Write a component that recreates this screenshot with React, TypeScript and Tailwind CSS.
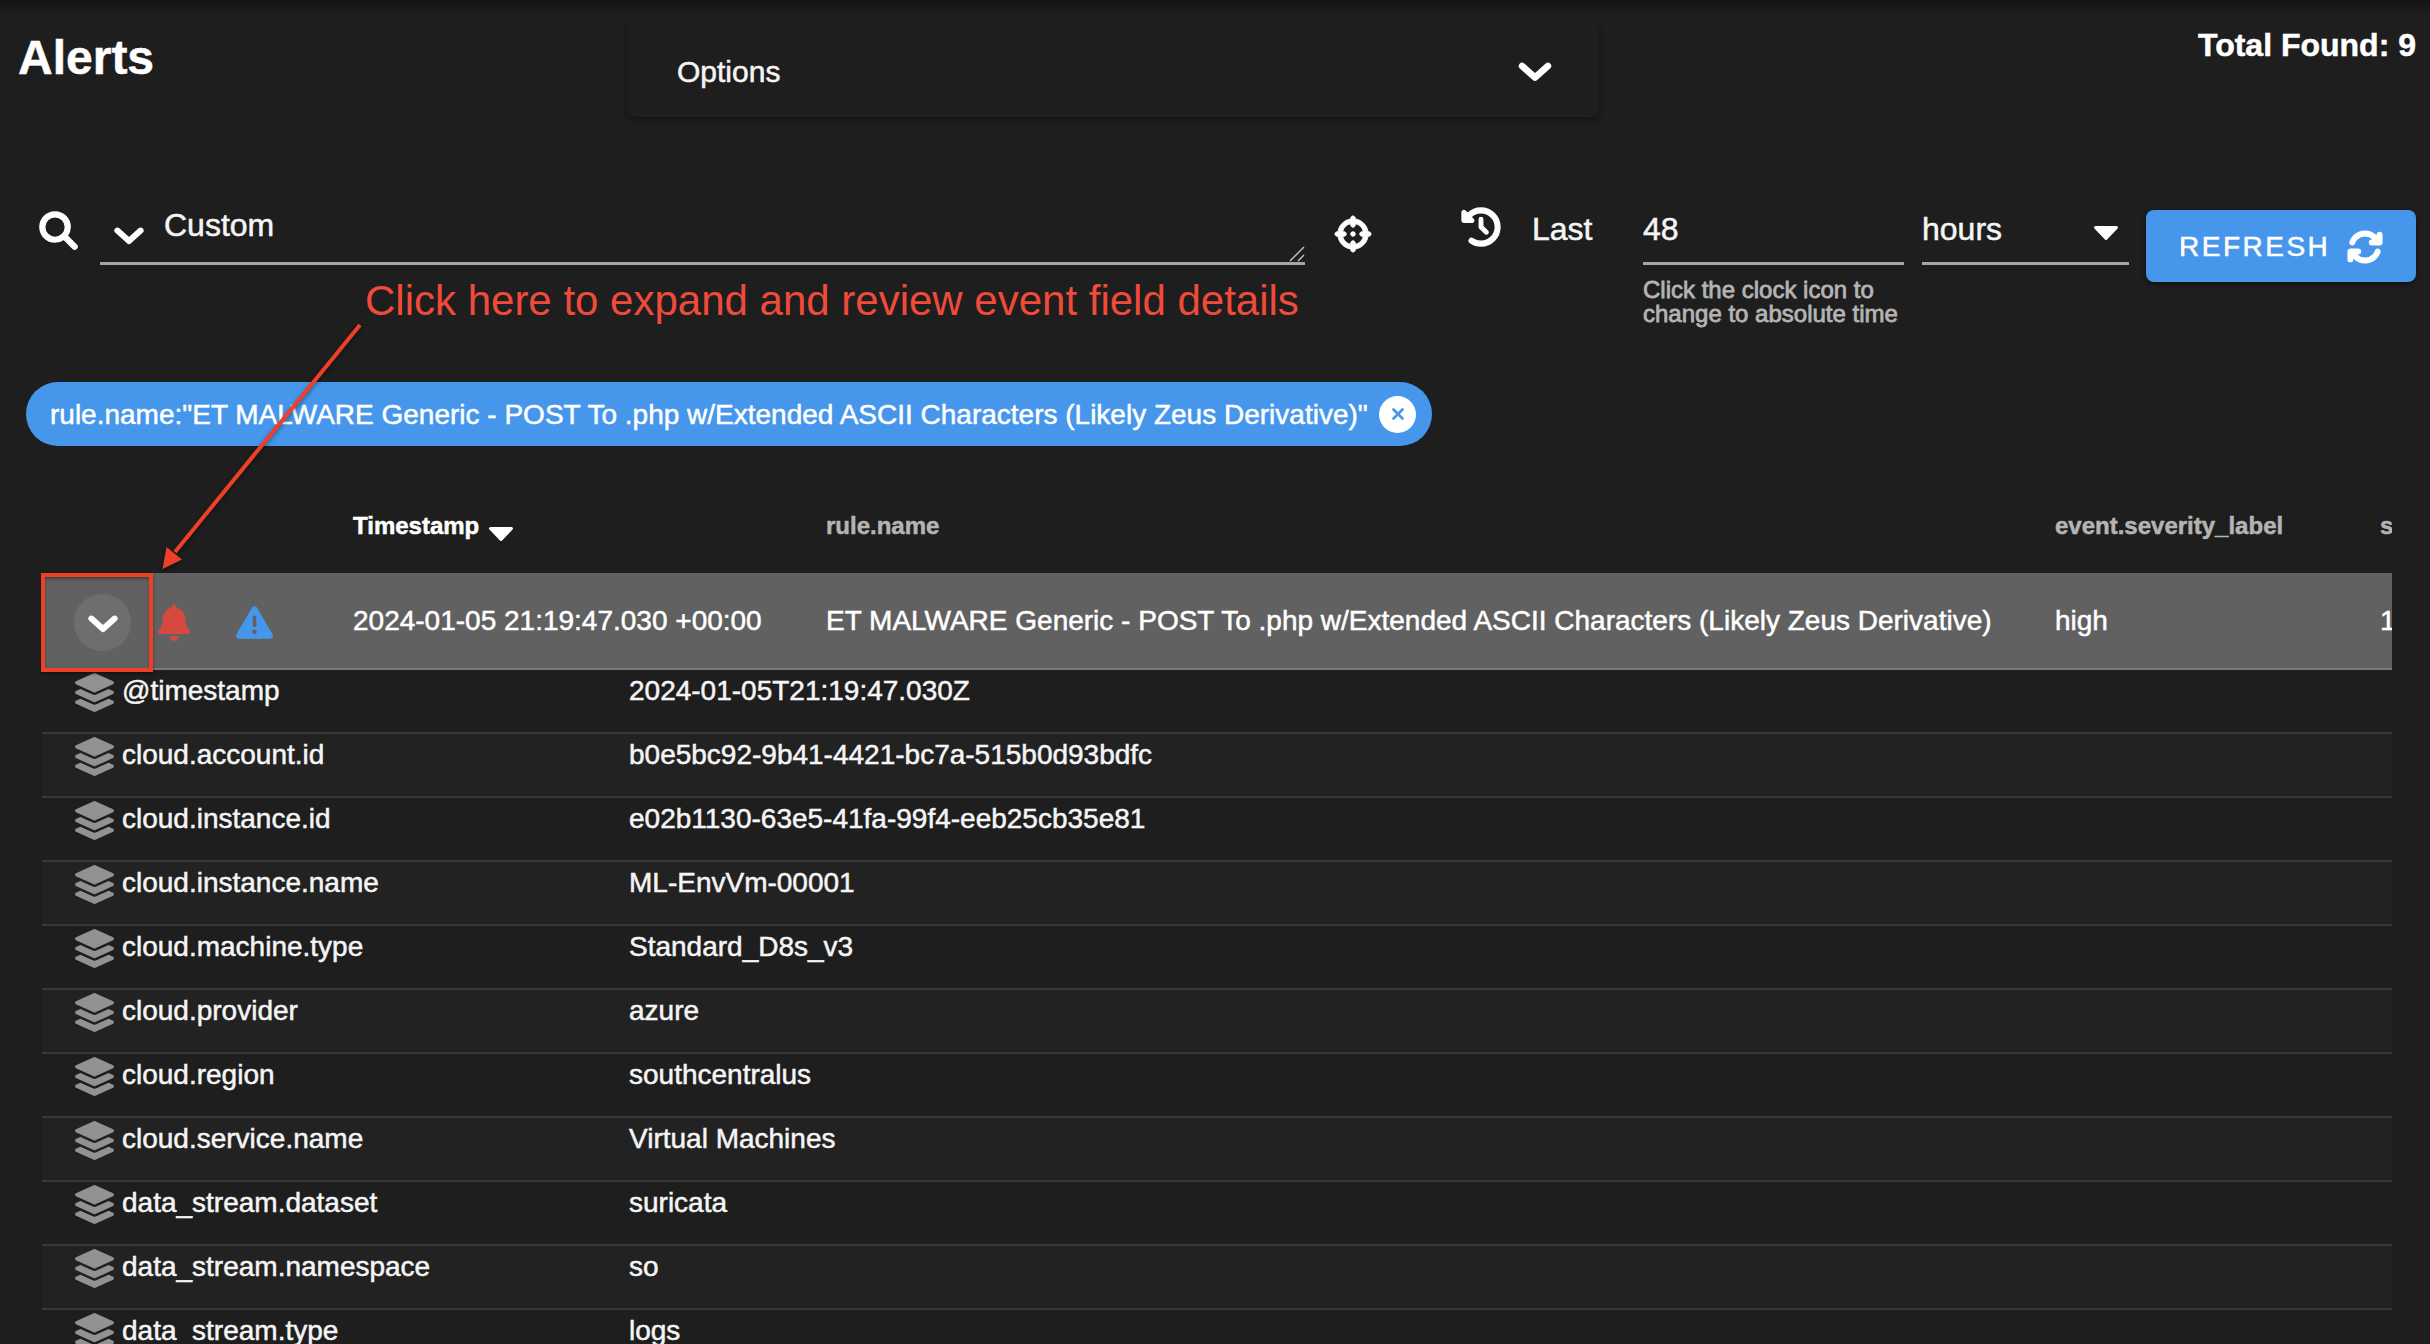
import React from "react";
import { FaLayerGroup } from "react-icons/fa";
import {
  FaArrowsRotate,
  FaBell,
  FaClockRotateLeft,
  FaCrosshairs,
  FaMagnifyingGlass,
  FaTriangleExclamation,
} from "react-icons/fa6";

const fields: [string, string][] = [
  ["@timestamp", "2024-01-05T21:19:47.030Z"],
  ["cloud.account.id", "b0e5bc92-9b41-4421-bc7a-515b0d93bdfc"],
  ["cloud.instance.id", "e02b1130-63e5-41fa-99f4-eeb25cb35e81"],
  ["cloud.instance.name", "ML-EnvVm-00001"],
  ["cloud.machine.type", "Standard_D8s_v3"],
  ["cloud.provider", "azure"],
  ["cloud.region", "southcentralus"],
  ["cloud.service.name", "Virtual Machines"],
  ["data_stream.dataset", "suricata"],
  ["data_stream.namespace", "so"],
  ["data_stream.type", "logs"],
];

const ruleName =
  "ET MALWARE Generic - POST To .php w/Extended ASCII Characters (Likely Zeus Derivative)";

function Chevron({ className }: { className: string }) {
  return (
    <svg viewBox="0 0 30 18" className={className} fill="none">
      <path
        d="M3.4 3.6 15 14 26.6 3.6"
        stroke="#fff"
        strokeWidth="6"
        strokeLinecap="round"
        strokeLinejoin="round"
      />
    </svg>
  );
}

function Caret({ className }: { className: string }) {
  return (
    <svg viewBox="0 0 26 16" className={className}>
      <path
        d="M2.5 2.5h21L13 13.5z"
        fill="#fff"
        stroke="#fff"
        strokeWidth="3"
        strokeLinejoin="round"
      />
    </svg>
  );
}

function Header() {
  return (
    <header className="flex h-[190px] items-start">
      <h1 className="mt-[28px] ml-[18px] w-[609px] text-[48px] leading-[60px] font-bold text-white">
        Alerts
      </h1>
      <div className="mt-[21px] flex h-24 w-[972px] items-center justify-between rounded-lg pt-[6px] pr-[47px] pl-[50px] shadow-[0_3px_6px_rgba(0,0,0,0.35)]">
        <span className="text-[30px] leading-9">Options</span>
        <Chevron className="h-5 w-[34px]" />
      </div>
      <div className="mt-[25px] ml-auto pr-[14px] text-[32px] leading-10 font-bold text-white">
        Total Found: 9
      </div>
    </header>
  );
}

function SearchBar() {
  return (
    <section className="flex h-48 items-start">
      <FaMagnifyingGlass className="mt-[22px] ml-[40px] size-[37px] shrink-0 overflow-visible stroke-current stroke-[22] text-white" />
      <div className="relative ml-[23px] flex h-[75px] w-[1205px] items-start border-b-[3px] border-[#a5a5a5]">
        <Chevron className="mt-[37px] ml-[14px] h-[18px] w-[30px]" />
        <span className="mt-[15px] ml-[20px] text-[32px] leading-10">Custom</span>
        <svg
          viewBox="0 0 16 16"
          className="absolute right-0 bottom-0 size-4"
          fill="none"
          stroke="#c8c8c8"
          strokeWidth="1.4"
        >
          <path d="M1 15 15 1M9 15l6-6" />
        </svg>
      </div>
      <FaCrosshairs className="mt-[26px] ml-[30px] size-[36px] shrink-0 overflow-visible stroke-current stroke-[14] text-white" />
      <FaClockRotateLeft className="mt-[18px] ml-[91px] size-[38px] shrink-0 overflow-visible stroke-current stroke-[18] text-white" />
      <span className="mt-[19px] ml-[32px] w-[111px] text-[32px] leading-10">Last</span>
      <div className="w-[261px]">
        <div className="h-[75px] border-b-[3px] border-[#a5a5a5] pt-[19px] text-[32px] leading-10">
          48
        </div>
        <p className="mt-[13px] text-[24px] leading-6 whitespace-nowrap text-[#b4b4b4] [-webkit-text-stroke:0.8px]">
          Click the clock icon to
          <br />
          change to absolute time
        </p>
      </div>
      <div className="ml-[18px] flex h-[75px] w-[207px] items-start justify-between border-b-[3px] border-[#a5a5a5] pr-[10px]">
        <span className="mt-[19px] text-[32px] leading-10">hours</span>
        <Caret className="mt-[35px] h-4 w-[26px]" />
      </div>
      <button className="mt-5 ml-[17px] flex h-[72px] w-[270px] items-center rounded-lg bg-[#4696ec] pt-px pl-[33px] text-[28px] text-white shadow-[0_2px_5px_rgba(0,0,0,0.5)]">
        <span className="tracking-[2.5px]">REFRESH</span>
        <FaArrowsRotate className="ml-[17px] size-[36px] overflow-visible stroke-current stroke-[20]" />
      </button>
    </section>
  );
}

function FilterChip() {
  return (
    <div className="ml-[26px] flex h-16 w-[1406px] items-center justify-between rounded-full bg-[#4696ec] pr-[16px] pl-[24px]">
      <span className="mt-px text-[28px] leading-9 whitespace-nowrap text-white">
        rule.name:"{ruleName}"
      </span>
      <span className="flex size-[37px] items-center justify-center rounded-full bg-white">
        <svg viewBox="0 0 12 12" className="size-3" stroke="#4696ec" strokeWidth="2.6">
          <path d="m1.500 1.500 9 9M10.500 1.500l-9 9" strokeLinecap="round" />
        </svg>
      </span>
    </div>
  );
}

function EventTable() {
  return (
    <section className="mt-[34px] ml-[42px] w-[2350px] overflow-hidden">
      <div className="grid h-[93px] grid-cols-[311px_473px_1229px_325px_12px] items-center pb-[2px] text-[24px] font-bold text-[#b4b4b4]">
        <span />
        <span className="flex items-center text-white">
          Timestamp
          <Caret className="mt-[17px] ml-[9px] h-4 w-[26px]" />
        </span>
        <span>rule.name</span>
        <span>event.severity_label</span>
        <span>s</span>
      </div>
      <div className="grid h-[97px] grid-cols-[311px_473px_1229px_325px_12px] items-center border-b-2 border-[#7a7a7a] bg-[#616161] text-[28px] whitespace-nowrap text-white">
        <span className="flex items-center pt-[3px] pl-8">
          <span className="flex size-[57px] items-center justify-center rounded-full bg-[#6e6e6e]">
            <Chevron className="mt-[3px] h-[18px] w-[30px]" />
          </span>
          <FaBell className="ml-[27px] h-[37px] w-8 text-[#d6493e]" />
          <FaTriangleExclamation className="ml-[46px] size-[37px] text-[#4696ec]" />
        </span>
        <span>2024-01-05 21:19:47.030 +00:00</span>
        <span>{ruleName}</span>
        <span>high</span>
        <span>1</span>
      </div>
      {fields.map(([name, value]) => (
        <div
          key={name}
          className="flex h-16 items-start border-b-2 border-[#383838] pl-[33px] text-[28px] leading-[41px] odd:bg-[#1e1e1e] even:bg-[#222222]"
        >
          <FaLayerGroup className="mt-[3px] size-[39px] text-[#929292]" />
          <span className="ml-[8px] w-[507px]">{name}</span>
          <span>{value}</span>
        </div>
      ))}
    </section>
  );
}

function Annotation() {
  return (
    <>
      <div className="absolute top-[276px] left-[365px] text-[42px] leading-[50px] whitespace-nowrap text-[#f04b3a] [-webkit-text-stroke:0]">
        Click here to expand and review event field details
      </div>
      <svg
        viewBox="0 0 240 270"
        className="absolute top-[310px] left-[140px] h-[270px] w-[240px] drop-shadow-[0_2px_2px_rgba(0,0,0,0.4)]"
      >
        <path d="M220 15 35 242" stroke="#ee4027" strokeWidth="4" />
        <path d="m22.500 259 4-22 15.500 12.500z" fill="#ee4027" />
      </svg>
      <div className="absolute top-[573px] left-[41px] h-[99px] w-[112px] border-4 border-[#ee4027] shadow-[0_2px_3px_rgba(0,0,0,0.4),inset_0_2px_3px_rgba(0,0,0,0.35)]" />
    </>
  );
}

export default function App() {
  return (
    <main className="relative h-[1344px] w-[2430px] overflow-hidden bg-[#1e1e1e] font-['Liberation_Sans',Arial,sans-serif] text-[#f5f5f5] [-webkit-text-stroke:0.5px]">
      <div className="absolute inset-x-0 top-0 h-4 bg-linear-to-b from-black/35 to-transparent" />
      <Header />
      <SearchBar />
      <FilterChip />
      <EventTable />
      <Annotation />
    </main>
  );
}
